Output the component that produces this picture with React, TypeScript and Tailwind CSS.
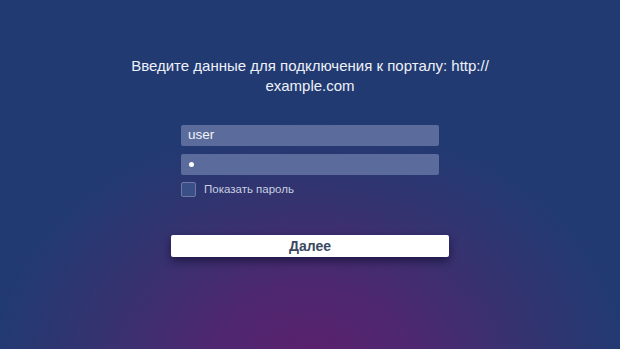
import React from "react";

export default function App() {
  return (
    <div
      className="w-[620px] h-[349px] overflow-hidden flex flex-col items-center bg-[#213a72]"
      style={{
        fontFamily: '"Liberation Sans", Arial, sans-serif',
        backgroundImage:
          "radial-gradient(ellipse 320px 250px at 310px 370px, #5c1f6e 0%, #4d2870 35%, #323470 72%, #213a72 100%)",
      }}
    >
      <div className="mt-[56px] w-[380px] text-center text-[15px] leading-[20px] text-[#eef1f8]">
        Введите данные для подключения к порталу: http://
        <br />
        example.com
      </div>
      <div className="mt-[29px] w-[258px] flex flex-col">
        <div className="h-[21px] rounded-[2px] bg-[#5b6c9c] flex items-center px-[7px] text-[13.5px] text-[#f2f4fa]">
          user
        </div>
        <div className="mt-[8px] h-[21px] rounded-[2px] bg-[#5b6c9c] flex items-center px-[8px]">
          <span className="w-[5px] h-[5px] rounded-full bg-white" />
        </div>
        <div className="mt-[6px] flex items-center gap-[8px]">
          <span className="w-[15px] h-[15px] rounded-[2px] border border-[#6d7aa3] bg-[#3a4f86]" />
          <span className="text-[11.5px] text-[#c9cfe0]">Показать пароль</span>
        </div>
      </div>
      <div className="mt-[37px] w-[278px] h-[22px] rounded-[2px] bg-white flex items-center justify-center text-[14px] font-bold text-[#3b4862] shadow-[0_4px_8px_rgba(10,10,40,0.6)]">
        Далее
      </div>
    </div>
  );
}
